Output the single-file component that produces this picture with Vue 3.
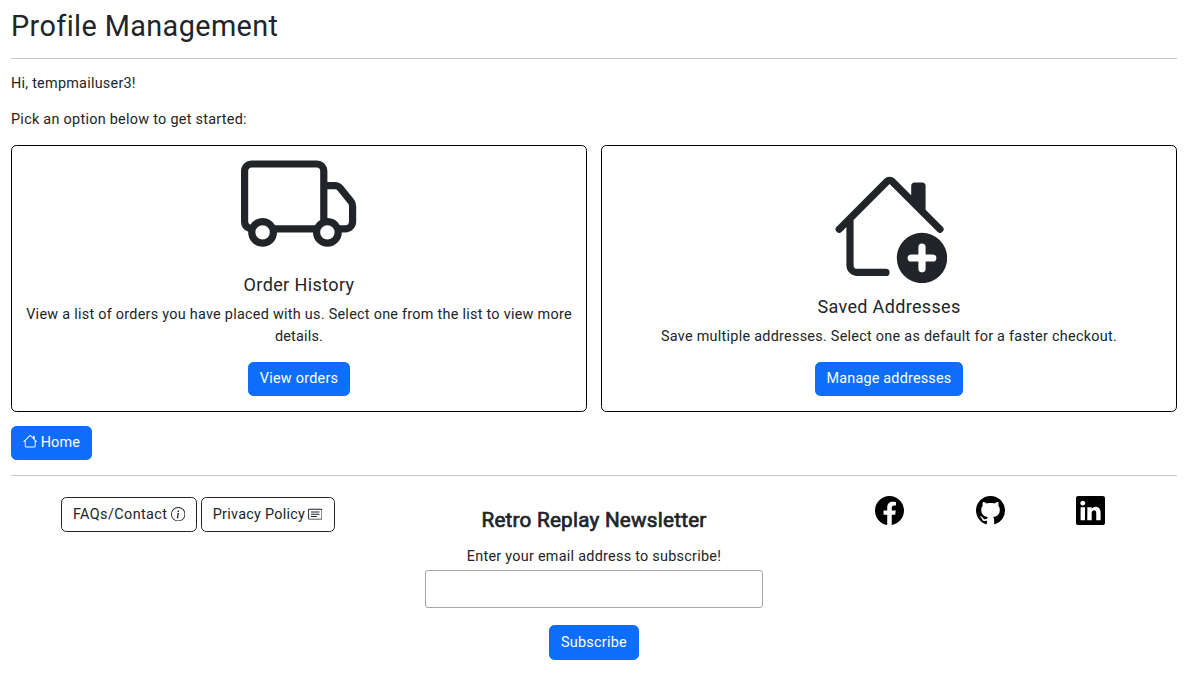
<script setup>
</script>

<template>
  <main class="page">
    <h1>Profile Management</h1>
    <hr />
    <p class="greeting">Hi, tempmailuser3!</p>
    <p class="prompt">Pick an option below to get started:</p>

    <section class="cards">
      <article class="card">
        <svg class="hero" viewBox="0 0 16 16"><path d="M0 3.5A1.5 1.5 0 0 1 1.5 2h9A1.5 1.5 0 0 1 12 3.5V5h1.02a1.5 1.5 0 0 1 1.17.563l1.481 1.85a1.5 1.5 0 0 1 .329.938V10.5a1.5 1.5 0 0 1-1.5 1.5H14a2 2 0 1 1-4 0H5a2 2 0 1 1-3.998-.085A1.5 1.5 0 0 1 0 10.5zm1.294 7.456A2 2 0 0 1 4.732 11h5.536a2 2 0 0 1 .732-.732V3.5a.5.5 0 0 0-.5-.5h-9a.5.5 0 0 0-.5.5v7a.5.5 0 0 0 .294.456M12 10a2 2 0 0 1 1.732 1h.768a.5.5 0 0 0 .5-.5V8.35a.5.5 0 0 0-.11-.312l-1.48-1.85A.5.5 0 0 0 13.02 6H12zm-9 1a1 1 0 1 0 0 2 1 1 0 0 0 0-2m9 0a1 1 0 1 0 0 2 1 1 0 0 0 0-2" /></svg>
        <h2 class="orders-title">Order History</h2>
        <p class="orders-text">View a list of orders you have placed with us. Select one from the list to view more <span class="tail">details.</span></p>
        <button class="btn view">View orders</button>
      </article>
      <article class="card">
        <svg class="hero house" viewBox="0 0 16 16"><path d="M8.707 1.5a1 1 0 0 0-1.414 0L.646 8.146a.5.5 0 0 0 .708.708L2 8.207V13.5A1.5 1.5 0 0 0 3.5 15h4a.5.5 0 1 0 0-1h-4a.5.5 0 0 1-.5-.5V7.207l5-5 6.646 6.647a.5.5 0 0 0 .708-.708L13 5.793V2.5a.5.5 0 0 0-.5-.5h-1a.5.5 0 0 0-.5.5v1.293z" /><path d="M16 12.5a3.5 3.5 0 1 1-7 0 3.5 3.5 0 0 1 7 0m-3.5-2a.5.5 0 0 0-.5.5v1h-1a.5.5 0 0 0 0 1h1v1a.5.5 0 1 0 1 0v-1h1a.5.5 0 1 0 0-1h-1v-1a.5.5 0 0 0-.5-.5" /></svg>
        <h2 class="saved-title">Saved Addresses</h2>
        <p class="saved-text">Save multiple addresses. Select one as default for a faster checkout.</p>
        <button class="btn manage">Manage addresses</button>
      </article>
    </section>

    <button class="btn home"><svg class="icon" viewBox="0 0 16 16"><path d="M8.707 1.5a1 1 0 0 0-1.414 0L.646 8.146a.5.5 0 0 0 .708.708L2 8.207V13.5A1.5 1.5 0 0 0 3.5 15h9a1.5 1.5 0 0 0 1.5-1.5V8.207l.646.647a.5.5 0 0 0 .708-.708L13 5.793V2.5a.5.5 0 0 0-.5-.5h-1a.5.5 0 0 0-.5.5v1.293zM13 7.207V13.5a.5.5 0 0 1-.5.5h-9a.5.5 0 0 1-.5-.5V7.207l5-5z" /></svg>Home</button>
    <hr class="divider" />

    <footer>
      <div class="links">
        <button class="btn outline faq">FAQs/Contact<svg class="icon" viewBox="0 0 16 16"><path d="M8 15A7 7 0 1 1 8 1a7 7 0 0 1 0 14m0 1A8 8 0 1 0 8 0a8 8 0 0 0 0 16" /><path d="m8.93 6.588-2.29.287-.082.38.45.083c.294.07.352.176.288.469l-.738 3.468c-.194.897.105 1.319.808 1.319.545 0 1.178-.252 1.465-.598l.088-.416c-.2.176-.492.246-.686.246-.275 0-.375-.193-.304-.533zM9 4.5a1 1 0 1 1-2 0 1 1 0 0 1 2 0" /></svg></button>
        <button class="btn outline privacy">Privacy Policy<svg class="icon" viewBox="0 0 16 16"><path d="M14.5 3a.5.5 0 0 1 .5.5v9a.5.5 0 0 1-.5.5h-13a.5.5 0 0 1-.5-.5v-9a.5.5 0 0 1 .5-.5zm-13-1A1.5 1.5 0 0 0 0 3.5v9A1.5 1.5 0 0 0 1.5 14h13a1.5 1.5 0 0 0 1.5-1.5v-9A1.5 1.5 0 0 0 14.5 2z" /><path d="M3 5.5a.5.5 0 0 1 .5-.5h9a.5.5 0 0 1 0 1h-9a.5.5 0 0 1-.5-.5M3 8a.5.5 0 0 1 .5-.5h9a.5.5 0 0 1 0 1h-9A.5.5 0 0 1 3 8m0 2.5a.5.5 0 0 1 .5-.5h6a.5.5 0 0 1 0 1h-6a.5.5 0 0 1-.5-.5" /></svg></button>
      </div>
      <form class="newsletter" @submit.prevent>
        <h2>Retro Replay Newsletter</h2>
        <label for="email">Enter your email address to subscribe!</label>
        <input id="email" type="email" />
        <button class="btn subscribe">Subscribe</button>
      </form>
      <div class="social">
        <svg viewBox="0 0 16 16"><path d="M16 8.049c0-4.446-3.582-8.05-8-8.05C3.58 0-.002 3.603-.002 8.05c0 4.017 2.926 7.347 6.75 7.951v-5.625h-2.03V8.05H6.75V6.275c0-2.017 1.195-3.131 3.022-3.131.876 0 1.791.157 1.791.157v1.98h-1.009c-.993 0-1.303.621-1.303 1.258v1.51h2.218l-.354 2.326H9.25V16c3.824-.604 6.75-3.934 6.75-7.951" /></svg>
        <svg viewBox="0 0 16 16"><path d="M8 0C3.58 0 0 3.58 0 8c0 3.54 2.29 6.53 5.47 7.59.4.07.55-.17.55-.38 0-.19-.01-.82-.01-1.49-2.01.37-2.53-.49-2.69-.94-.09-.23-.48-.94-.82-1.13-.28-.15-.68-.52-.01-.53.63-.01 1.08.58 1.23.82.72 1.21 1.87.87 2.33.66.07-.52.28-.87.51-1.07-1.78-.2-3.64-.89-3.64-3.95 0-.87.31-1.59.82-2.15-.08-.2-.36-1.02.08-2.12 0 0 .67-.21 2.2.82.64-.18 1.32-.27 2-.27s1.36.09 2 .27c1.53-1.04 2.2-.82 2.2-.82.44 1.1.16 1.92.08 2.12.51.56.82 1.27.82 2.15 0 3.07-1.87 3.75-3.65 3.95.29.25.54.73.54 1.48 0 1.07-.01 1.93-.01 2.2 0 .21.15.46.55.38A8.01 8.01 0 0 0 16 8c0-4.42-3.58-8-8-8" /></svg>
        <svg viewBox="0 0 16 16"><path d="M0 1.146C0 .513.526 0 1.175 0h13.65C15.474 0 16 .513 16 1.146v13.708c0 .633-.526 1.146-1.175 1.146H1.175C.526 16 0 15.487 0 14.854zm4.943 12.248V6.169H2.542v7.225zm-1.2-8.212c.837 0 1.358-.554 1.358-1.248-.015-.709-.52-1.248-1.342-1.248S2.4 3.226 2.4 3.934c0 .694.521 1.248 1.327 1.248zm4.908 8.212V9.359c0-.216.016-.432.08-.586.173-.431.568-.878 1.232-.878.869 0 1.216.662 1.216 1.634v3.865h2.401V9.25c0-2.22-1.184-3.252-2.764-3.252-1.274 0-1.845.7-2.165 1.193v.025h-.016l.016-.025V6.169h-2.4c.03.678 0 7.225 0 7.225z" /></svg>
      </div>
    </footer>
  </main>
</template>

<style>
body { margin: 0; background: #fff; }
</style>

<style scoped>
* { box-sizing: border-box; }
.page {
  width: 1166px;
  margin-left: 11px;
  padding-top: 9px;
  font: 400 14.4px/22px Roboto, sans-serif;
  letter-spacing: .27px;
  color: #212529;
}
h1, h2, p { margin: 0; font-weight: 400; }
h1 { font-size: 28.8px; line-height: 34px; letter-spacing: .4px; }
hr { height: 1px; margin: 15px 0 14px; border: 0; background: #c7c8c9; }
p { margin-bottom: 14px; }
.greeting { letter-spacing: .25px; }
.prompt { letter-spacing: .28px; }
.cards { display: grid; grid-template-columns: 1fr 1fr; gap: 14px; }
.card {
  display: flex;
  flex-direction: column;
  align-items: center;
  justify-content: flex-end;
  height: 267px;
  padding: 0 13px 15px;
  border: 1px solid #000;
  border-radius: 5.4px;
  text-align: center;
}
.card p { margin-bottom: 14px; }
.hero { width: 115.2px; height: 115.2px; margin-bottom: 13.2px; fill: currentColor; }
.house { margin-left: 1.4px; }
.card h2 { margin-bottom: 7.6px; font-size: 18px; line-height: 22px; }
.card .orders-title { letter-spacing: .39px; }
.card .saved-title { letter-spacing: .34px; }
.tail { letter-spacing: .2px; }
.btn {
  display: inline-flex;
  align-items: center;
  justify-content: center;
  height: 34px;
  padding: 0 0 1px;
  border: 1px solid #0d6efd;
  border-radius: 5.4px;
  background: #0d6efd;
  color: #fff;
  font: inherit;
  letter-spacing: .26px;
  white-space: nowrap;
}
.icon { width: 14.4px; height: 14.4px; fill: currentColor; }
.view { width: 102px; }
.manage { width: 148px; letter-spacing: .19px; }
.home { width: 81px; margin-top: 14px; gap: 3.2px; letter-spacing: .15px; }
.home .icon { margin-bottom: 2px; }
.divider { margin: 15px 0 0; }
footer { display: grid; grid-template-columns: 374px 418px 374px; }
.links { display: flex; justify-content: center; gap: 4px; padding-top: 21px; }
.outline { height: 35px; padding: 0; background: #fff; border-color: #212529; color: #212529; gap: 3.3px; }
.outline .icon { margin-bottom: 1px; }
.faq { width: 136px; letter-spacing: .4px; }
.privacy { width: 134px; padding-right: 1px; gap: 2.8px; }
.newsletter { display: flex; flex-direction: column; align-items: center; padding-top: 32px; }
.newsletter h2 {
  font-size: 20.7px;
  line-height: 24px;
  letter-spacing: .22px;
  -webkit-text-stroke: .7px #212529;
}
.newsletter label { margin-top: 14px; letter-spacing: .27px; }
.newsletter input {
  width: 338px;
  height: 38px;
  margin-top: 2px;
  border: 1px solid #a2a8ad;
  border-radius: 3px;
  background: #fff;
}
.subscribe { width: 90px; height: 35px; margin-top: 17px; padding: 0; }
.social { display: flex; justify-content: center; gap: 71.7px; padding-top: 20px; color: #000; }
.social svg { width: 29px; height: 29px; fill: currentColor; }
</style>
